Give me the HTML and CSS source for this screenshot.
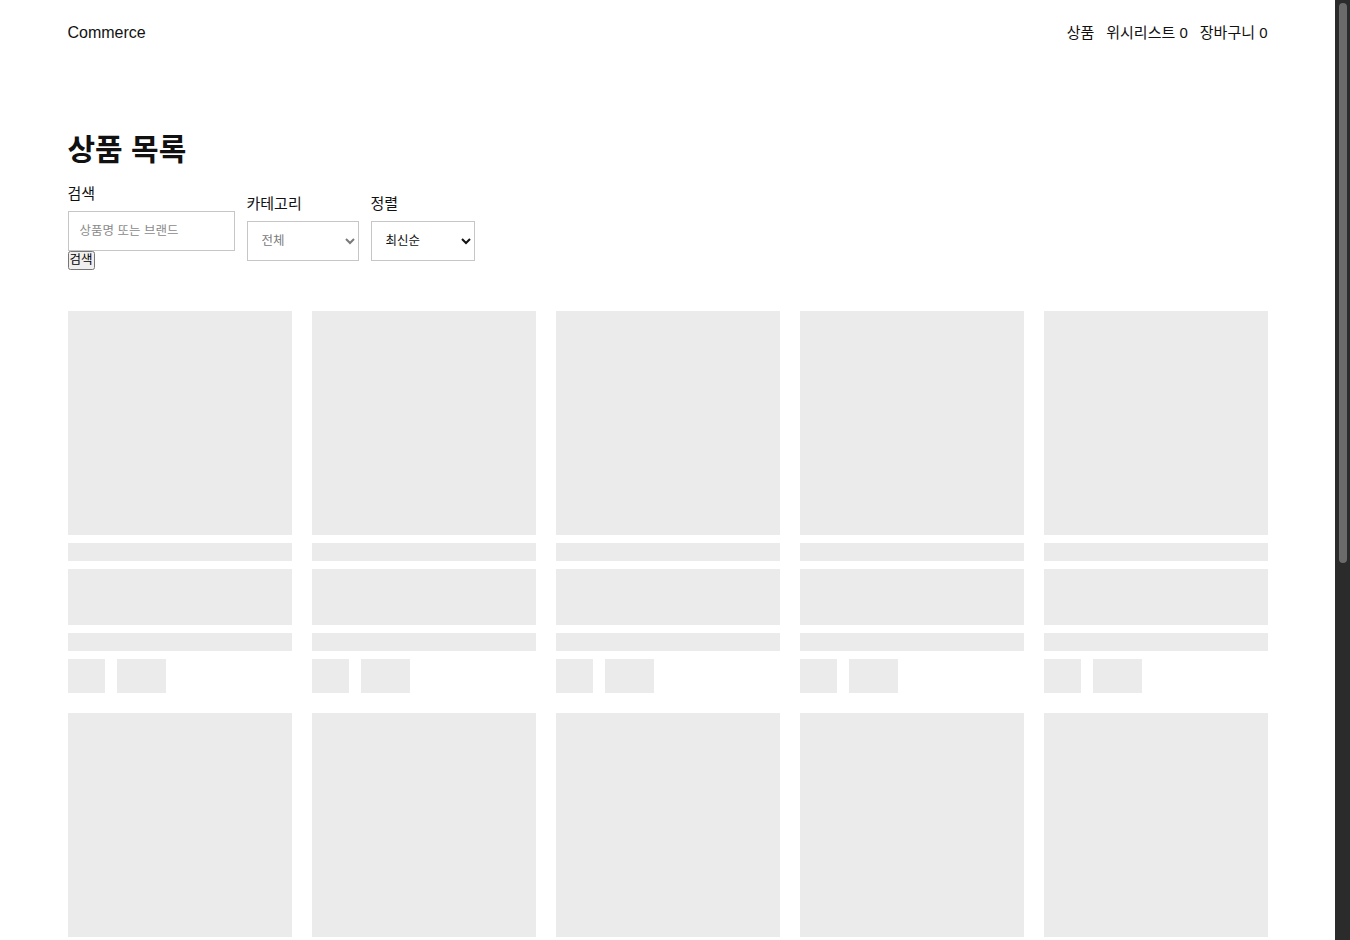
FILE: index.html
```html
<!DOCTYPE html>
<html lang="ko">
<head>
<meta charset="utf-8">
<title>Commerce</title>
<link rel="stylesheet" href="styles.css">
</head>
<body>
<header class="site-header">
  <a class="logo" href="#">Commerce</a>
  <nav class="nav">
    <a href="#">상품</a>
    <a href="#">위시리스트 0</a>
    <a href="#">장바구니 0</a>
  </nav>
</header>
<main class="page">
  <h1 class="title">상품 목록</h1>
  <div class="filters">
    <form class="field">
      <label for="q">검색</label>
      <input id="q" class="text-input" type="text" placeholder="상품명 또는 브랜드">
      <button type="submit" class="search-btn">검색</button>
    </form>
    <div class="field">
      <label for="cat">카테고리</label>
      <select id="cat" class="select select-muted">
        <option>전체</option>
      </select>
    </div>
    <div class="field">
      <label for="sort">정렬</label>
      <select id="sort" class="select select-sort">
        <option>최신순</option>
      </select>
    </div>
  </div>
  <div class="grid">
    <div class="card"><div class="sk sk-img"></div><div class="sk sk-line"></div><div class="sk sk-block"></div><div class="sk sk-line"></div><div class="sk-row"><div class="sk sk-a"></div><div class="sk sk-b"></div></div></div>
    <div class="card"><div class="sk sk-img"></div><div class="sk sk-line"></div><div class="sk sk-block"></div><div class="sk sk-line"></div><div class="sk-row"><div class="sk sk-a"></div><div class="sk sk-b"></div></div></div>
    <div class="card"><div class="sk sk-img"></div><div class="sk sk-line"></div><div class="sk sk-block"></div><div class="sk sk-line"></div><div class="sk-row"><div class="sk sk-a"></div><div class="sk sk-b"></div></div></div>
    <div class="card"><div class="sk sk-img"></div><div class="sk sk-line"></div><div class="sk sk-block"></div><div class="sk sk-line"></div><div class="sk-row"><div class="sk sk-a"></div><div class="sk sk-b"></div></div></div>
    <div class="card"><div class="sk sk-img"></div><div class="sk sk-line"></div><div class="sk sk-block"></div><div class="sk sk-line"></div><div class="sk-row"><div class="sk sk-a"></div><div class="sk sk-b"></div></div></div>
    <div class="card"><div class="sk sk-img"></div><div class="sk sk-line"></div><div class="sk sk-block"></div><div class="sk sk-line"></div><div class="sk-row"><div class="sk sk-a"></div><div class="sk sk-b"></div></div></div>
    <div class="card"><div class="sk sk-img"></div><div class="sk sk-line"></div><div class="sk sk-block"></div><div class="sk sk-line"></div><div class="sk-row"><div class="sk sk-a"></div><div class="sk sk-b"></div></div></div>
    <div class="card"><div class="sk sk-img"></div><div class="sk sk-line"></div><div class="sk sk-block"></div><div class="sk sk-line"></div><div class="sk-row"><div class="sk sk-a"></div><div class="sk sk-b"></div></div></div>
    <div class="card"><div class="sk sk-img"></div><div class="sk sk-line"></div><div class="sk sk-block"></div><div class="sk sk-line"></div><div class="sk-row"><div class="sk sk-a"></div><div class="sk sk-b"></div></div></div>
    <div class="card"><div class="sk sk-img"></div><div class="sk sk-line"></div><div class="sk sk-block"></div><div class="sk sk-line"></div><div class="sk-row"><div class="sk sk-a"></div><div class="sk sk-b"></div></div></div>
    <div class="card"><div class="sk sk-img"></div><div class="sk sk-line"></div><div class="sk sk-block"></div><div class="sk sk-line"></div><div class="sk-row"><div class="sk sk-a"></div><div class="sk sk-b"></div></div></div>
    <div class="card"><div class="sk sk-img"></div><div class="sk sk-line"></div><div class="sk sk-block"></div><div class="sk sk-line"></div><div class="sk-row"><div class="sk sk-a"></div><div class="sk sk-b"></div></div></div>
    <div class="card"><div class="sk sk-img"></div><div class="sk sk-line"></div><div class="sk sk-block"></div><div class="sk sk-line"></div><div class="sk-row"><div class="sk sk-a"></div><div class="sk sk-b"></div></div></div>
    <div class="card"><div class="sk sk-img"></div><div class="sk sk-line"></div><div class="sk sk-block"></div><div class="sk sk-line"></div><div class="sk-row"><div class="sk sk-a"></div><div class="sk sk-b"></div></div></div>
    <div class="card"><div class="sk sk-img"></div><div class="sk sk-line"></div><div class="sk sk-block"></div><div class="sk sk-line"></div><div class="sk-row"><div class="sk sk-a"></div><div class="sk sk-b"></div></div></div>
  </div>
</main>
<div class="scrollbar" aria-hidden="true"><div class="scrollbar-thumb"></div></div>
</body>
</html>
```

FILE: styles.css
```css
html {
  background: #ffffff;
}

body {
  margin: 0;
  padding-right: 15px;
  background: #ffffff;
  color: #111111;
  font-family: "Liberation Sans", Arial, "Noto Sans CJK KR", sans-serif;
  font-size: 15px;
  line-height: 24px;
}

a {
  color: inherit;
  text-decoration: none;
}

.site-header {
  max-width: 1200px;
  margin: 0 auto;
  padding: 21px 0;
  display: flex;
  justify-content: space-between;
  align-items: center;
}

.logo {
  font-size: 16px;
}

.nav {
  display: flex;
  gap: 12px;
}

.page {
  max-width: 1200px;
  margin: 0 auto;
  padding: 66px 0 70px;
}

.title {
  margin: 0 0 15px;
  font-size: 30px;
  line-height: 36px;
  font-weight: 700;
}

.filters {
  display: flex;
  align-items: center;
  gap: 12px;
}

.field {
  display: flex;
  flex-direction: column;
  align-items: flex-start;
  margin: 0;
}

.field label {
  display: block;
  line-height: 22px;
  margin-bottom: 6px;
}

.text-input {
  box-sizing: border-box;
  width: 167px;
  height: 40px;
  padding: 0 11px;
  border: 1px solid #c6c6c6;
  border-radius: 0;
  font-family: "Liberation Sans", Arial, "Noto Sans CJK KR", sans-serif;
  font-size: 12.5px;
  color: #111;
  background: #fff;
}

.text-input::placeholder {
  color: #8a8a8a;
}

.search-btn {
  padding: 0;
  font-family: "Liberation Sans", Arial, "Noto Sans CJK KR", sans-serif;
  font-size: 12.5px;
  line-height: 15px;
}

.select {
  box-sizing: border-box;
  height: 40px;
  padding: 0 12px 0 10px;
  border: 1px solid #c6c6c6;
  border-radius: 0;
  background-color: #fff;
  font-family: "Liberation Sans", Arial, "Noto Sans CJK KR", sans-serif;
  font-size: 12.5px;
}

.select-muted {
  width: 112px;
  color: #7a7a7a;
}

.select-sort {
  width: 104px;
  color: #111;
}

.grid {
  margin-top: 41px;
  display: grid;
  grid-template-columns: repeat(5, 1fr);
  gap: 20px;
}

.card {
  display: flex;
  flex-direction: column;
  gap: 8px;
}

.sk {
  background: #ebebeb;
}

.sk-img {
  aspect-ratio: 1 / 1;
}

.sk-line {
  height: 18px;
}

.sk-block {
  height: 56px;
}

.sk-row {
  display: flex;
  gap: 12px;
}

.sk-a {
  width: 37px;
  height: 34px;
}

.sk-b {
  width: 49px;
  height: 34px;
}

.scrollbar {
  position: fixed;
  top: 0;
  right: 0;
  width: 15px;
  height: 100vh;
  background: #2b2b2b;
}

.scrollbar-thumb {
  position: absolute;
  top: 3px;
  left: 4px;
  width: 8px;
  height: 560px;
  border-radius: 4px;
  background: #6b6b6b;
}
```
